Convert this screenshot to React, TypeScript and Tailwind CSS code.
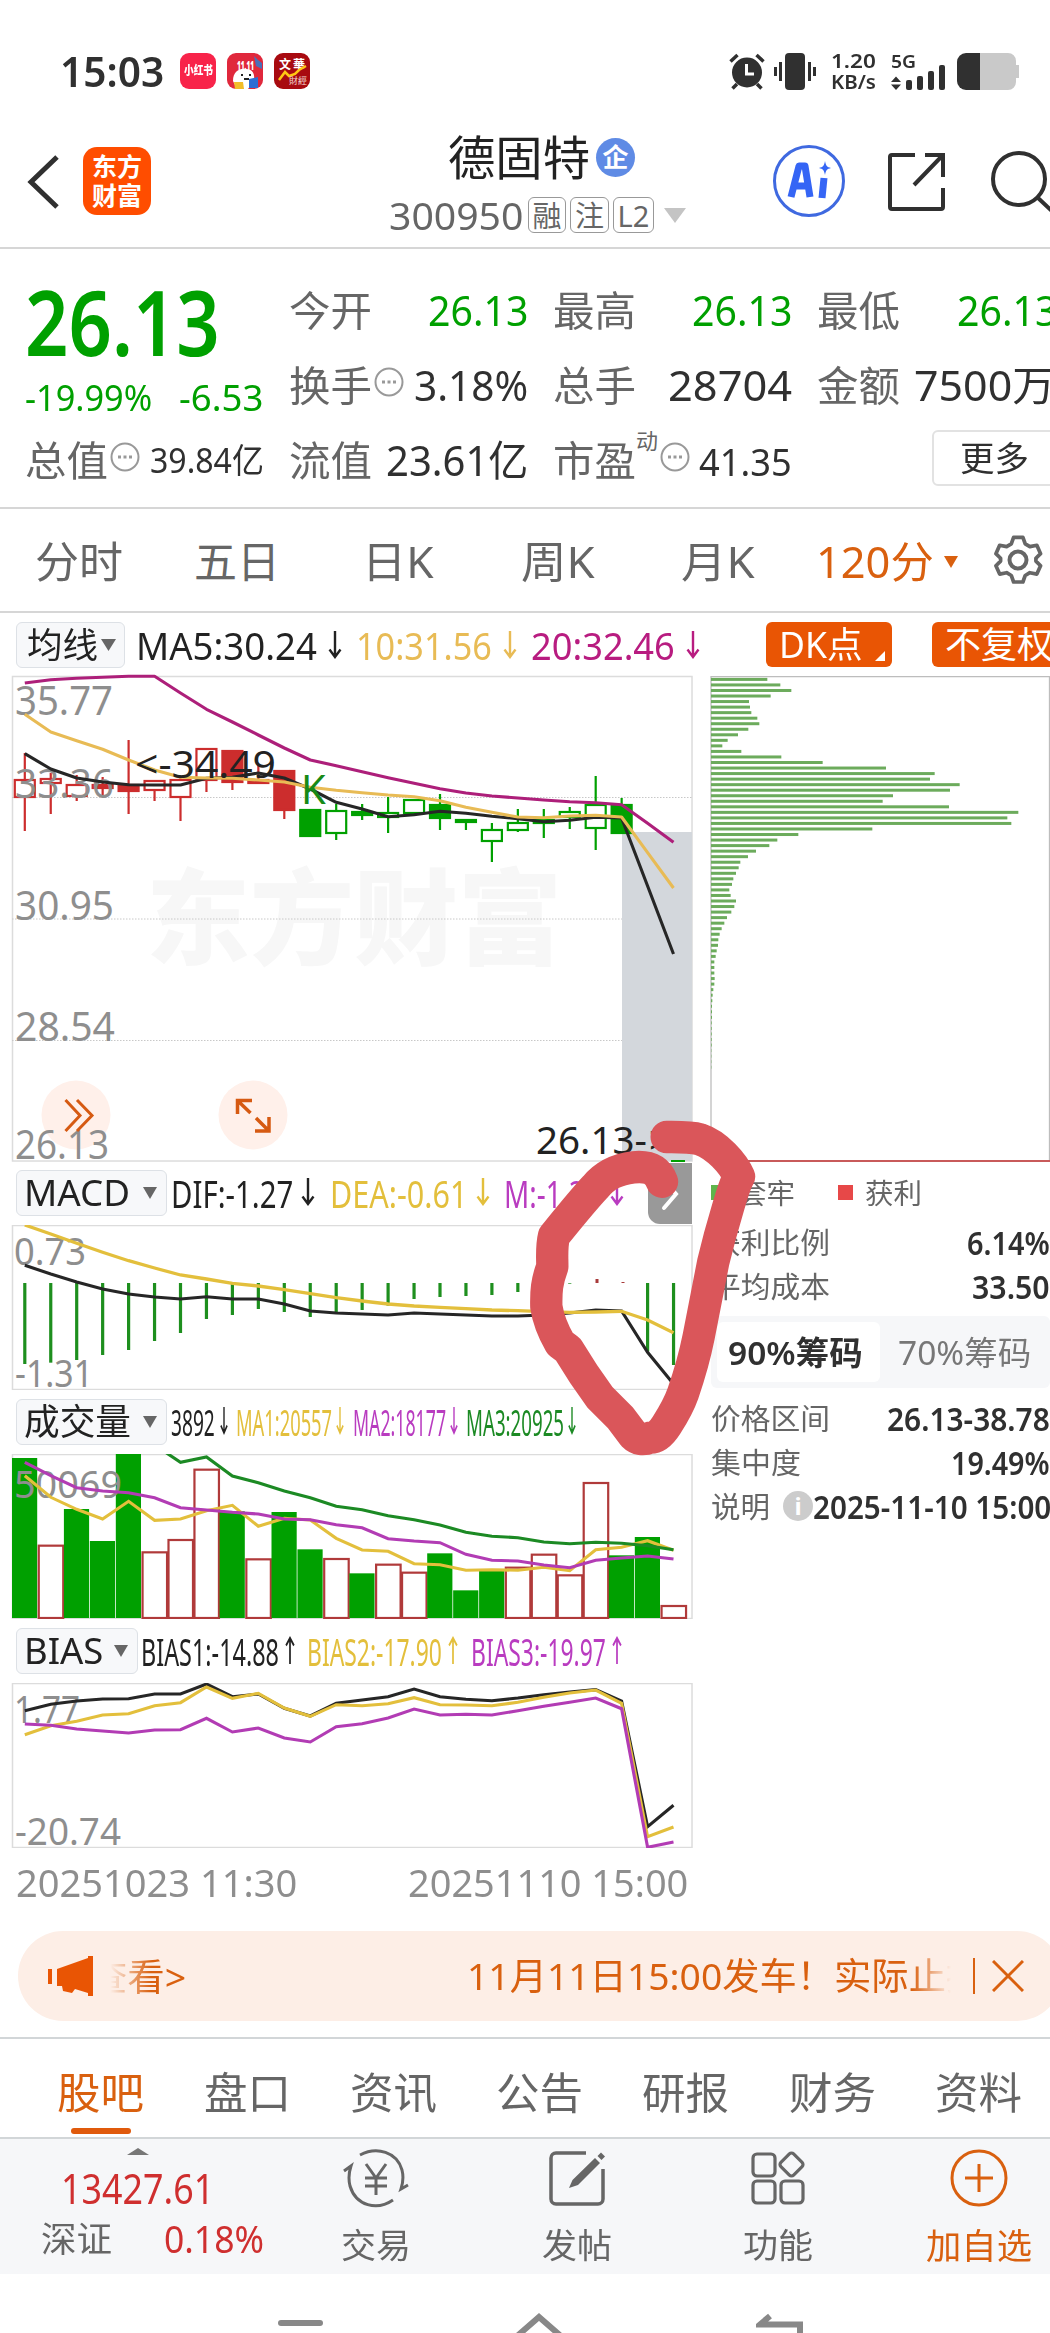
import { useLayoutEffect, useRef, useState } from "react";
import type { ReactNode } from "react";

/* Text condensed or stretched horizontally to the width of its box. */
function Fit({ className, children }: { className: string; children: ReactNode }) {
  const box = useRef<HTMLSpanElement>(null);
  const text = useRef<HTMLSpanElement>(null);
  const [scale, setScale] = useState(1);
  useLayoutEffect(() => {
    if (box.current && text.current && text.current.offsetWidth > 0) {
      setScale(box.current.clientWidth / text.current.offsetWidth);
    }
  }, [children]);
  return (
    <span ref={box} className={`inline-block shrink-0 leading-none ${className}`}>
      <span ref={text} className="inline-block origin-left whitespace-nowrap" style={{ transform: `scaleX(${scale})` }}>
        {children}
      </span>
    </span>
  );
}

function Arrow({ up, className }: { up?: boolean; className: string }) {
  return (
    <svg viewBox="0 0 14 28" preserveAspectRatio="none" className={`h-7 shrink-0 ${className}`} fill="none" stroke="currentColor" strokeWidth="2.4">
      {up ? <path d="M7 28V2M1.5 9.5 7 2l5.500 7.500" /> : <path d="M7 0v26M1.500 18.500 7 26l5.500-7.500" />}
    </svg>
  );
}

function Caret({ className }: { className: string }) {
  return (
    <svg viewBox="0 0 14 12" preserveAspectRatio="none" className={`shrink-0 ${className}`} fill="currentColor">
      <path d="M0 0h14L7 12z" />
    </svg>
  );
}

function Dots() {
  return (
    <svg viewBox="0 0 30 30" className="ml-[2px] size-[30px] shrink-0 -translate-y-[3px]" fill="none" stroke="#999" strokeWidth="2">
      <circle cx="15" cy="15" r="13.500" />
      <path d="M8 15h3M13.500 15h3M19 15h3" strokeWidth="3" />
    </svg>
  );
}

const X0 = 24.8;
const STEP = 25.95;
const line = (values: number[], start = 0) =>
  values.map((v, i) => `${(X0 + (start + i) * STEP).toFixed(1)},${v}`).join(" ");
const thirds = (base: number, values: number[]) => values.map((v) => +(base + v / 3).toFixed(1));

const RED = "#cc2d2d";
const GREEN = "#00a000";

/* colour, kind (h hollow, f filled), body top/bottom, wick top/bottom */
const candles: [string, string, number, number, number, number][] = [
  [RED, "h", 780, 797, 753, 831],
  [RED, "h", 779, 783, 773, 814],
  [RED, "h", 785, 796, 775, 801],
  [RED, "f", 785, 788, 777, 796],
  [RED, "f", 785, 791, 740, 814],
  [RED, "h", 781, 790, 780, 801],
  [RED, "h", 780, 797, 778, 821],
  [RED, "h", 749, 780, 748, 792],
  [RED, "f", 751, 782, 751, 790],
  [RED, "f", 780, 783, 765, 783],
  [RED, "f", 771, 810, 771, 819],
  [GREEN, "f", 810, 836, 809, 837],
  [GREEN, "h", 811, 833, 804, 840],
  [GREEN, "f", 812, 815, 804, 820],
  [GREEN, "h", 813, 817, 797, 833],
  [GREEN, "h", 800, 813, 800, 814],
  [GREEN, "f", 805, 818, 794, 830],
  [GREEN, "f", 820, 822, 820, 830],
  [GREEN, "h", 830, 841, 823, 862],
  [GREEN, "h", 823, 830, 809, 832],
  [GREEN, "f", 820, 823, 809, 838],
  [GREEN, "h", 812, 817, 807, 829],
  [GREEN, "h", 805, 828, 776, 850],
  [GREEN, "f", 805, 833, 798, 833],
];
const ma5 = thirds(660, [281, 327, 354, 366, 374, 375, 375, 355, 352, 339, 354, 387, 427, 447, 470, 464, 454, 460, 469, 476, 485, 481, 472, 474, 678, 882]);
const ma10 = thirds(660, [163, 216, 242, 268, 300, 330, 352, 354, 355, 360, 366, 382, 391, 398, 405, 410, 422, 442, 457, 471, 473, 468, 466, 471, 578, 684]);
const ma20 = thirds(660, [69, 59, 55, 52, 49, 49, 99, 148, 186, 225, 264, 300, 317, 335, 353, 370, 386, 399, 408, 414, 420, 425, 428, 434, 490, 547]);

const SVG_FONT = "[font-family:'Noto_Sans',sans-serif]";

function PriceChart() {
  return (
    <svg viewBox="0 676 700 485" className={`block h-[485px] w-[700px] overflow-visible ${SVG_FONT}`}>
      <rect x="12.500" y="676.500" width="679.500" height="484.500" fill="#fff" stroke="#dcdcdc" strokeWidth="1.500" />
      <text x="146" y="957" fontSize="104" fontWeight="900" fill="#f7f7f7" textLength="416" className="[font-family:'Noto_Sans_CJK_SC',sans-serif]">东方财富</text>
      <g stroke="#c8c8c8" strokeDasharray="1.500 1.500">
        <path d="M12 797.500h680M12 919h680M12 1040.500h680" />
      </g>
      <rect x="622" y="832" width="70" height="329" fill="#d3d7dc" />
      <circle cx="76" cy="1115" r="34.500" fill="#fff0ea" />
      <circle cx="253" cy="1115" r="34.500" fill="#fff0ea" />
      {candles.map(([c, kind, t, b, wt, wb], i) => {
        const x = X0 + i * STEP;
        return (
          <g key={i} stroke={c} strokeWidth="2.200">
            <path d={`M${x} ${wt}V${t}M${x} ${b}V${wb}`} />
            <rect x={x - 10} y={t} width="20" height={b - t} fill={kind === "f" ? c : "#fff"} />
          </g>
        );
      })}
      <g fill="#8e8e8e" fontSize="40">
        <text x="15" y="715" textLength="98" lengthAdjust="spacingAndGlyphs">35.77</text>
        <text x="15" y="798" textLength="99" lengthAdjust="spacingAndGlyphs">33.36</text>
        <text x="15" y="920" textLength="99" lengthAdjust="spacingAndGlyphs">30.95</text>
        <text x="15" y="1041" textLength="100" lengthAdjust="spacingAndGlyphs">28.54</text>
        <text x="15" y="1159" textLength="94" lengthAdjust="spacingAndGlyphs">26.13</text>
      </g>
      <g fill="none" strokeWidth="3.100" strokeLinejoin="round">
        <polyline points={line(ma5)} stroke="#262626" />
        <polyline points={line(ma10)} stroke="#e8bb55" />
        <polyline points={line(ma20)} stroke="#ad1f7a" />
      </g>
      <g fill="#222" fontSize="39">
        <text x="135" y="778" textLength="141" lengthAdjust="spacingAndGlyphs">&lt;-34.49</text>
        <text x="536" y="1154" textLength="111" lengthAdjust="spacingAndGlyphs">26.13-</text>
        <text x="649" y="1154">&gt;</text>
      </g>
      <text x="301" y="804" fontSize="40" fill="#178a17">K</text>
      <g fill="none" stroke="#d65a12" strokeWidth="3">
        <path d="M65.500 1100 80 1115.500 65.500 1131M77 1100l15 15.500L77 1131" />
        <path d="M237.500 1114v-13.500H252M238 1101l12.500 12M269 1117v14h-14M268.500 1130.500 256 1118" strokeWidth="3.500" />
      </g>
      <path d="M671 1161h14" stroke={GREEN} strokeWidth="2" />
    </svg>
  );
}

const macdBars = [612, 608, 600, 585, 570, 543, 519, 477, 465, 447, 456, 471, 459, 450, 437, 417, 411, 408, 405, 396, 385, 371, 0, 0, 574, 615];
const dif = thirds(1160, [316, 342, 366, 387, 402, 411, 417, 410, 417, 417, 432, 453, 459, 462, 465, 459, 462, 465, 468, 468, 465, 459, 450, 453, 577, 672]);
const dea = thirds(1160, [195, 222, 250, 277, 302, 324, 345, 357, 370, 378, 389, 401, 413, 423, 432, 438, 442, 446, 450, 452, 455, 457, 456, 454, 480, 518]);

function MacdChart() {
  return (
    <svg viewBox="0 1225 700 165" className={`block h-[165px] w-[700px] ${SVG_FONT}`}>
      <rect x="12.500" y="1225.500" width="679.500" height="164" fill="#fff" stroke="#dcdcdc" strokeWidth="1.500" />
      <g fill="#8e8e8e" fontSize="38">
        <text x="14" y="1265" textLength="72" lengthAdjust="spacingAndGlyphs">0.73</text>
        <text x="15" y="1387" textLength="78" lengthAdjust="spacingAndGlyphs">-1.31</text>
      </g>
      {macdBars.map((v, i) =>
        v ? <path key={i} d={`M${X0 + i * STEP} 1283V${1160 + v / 3}`} stroke="#1e8f1e" strokeWidth="3.200" /> : null,
      )}
      <path d="M597 1279v4M623 1282v1" stroke="#a83a3a" strokeWidth="3" />
      <polyline points={line(dif)} fill="none" stroke="#262626" strokeWidth="3.100" />
      <polyline points={line(dea)} fill="none" stroke="#e3bf3c" strokeWidth="3.300" />
    </svg>
  );
}

const volumes: [number, 0 | 1][] = [
  [54, 0], [314, 1], [207, 0], [303, 0], [42, 0], [334, 1], [297, 1], [86, 1], [214, 0], [355, 1], [216, 0], [328, 0], [354, 1],
  [400, 0], [371, 1], [395, 1], [340, 0], [451, 0], [388, 0], [380, 1], [341, 1], [403, 1], [126, 1], [346, 0], [291, 0], [495, 1],
];
const vol1 = thirds(1440, [107, 172, 208, 237, 184, 241, 237, 212, 196, 259, 235, 240, 295, 330, 334, 371, 374, 391, 389, 391, 382, 392, 329, 322, 302, 331]);
const vol2 = thirds(1440, [67, 107, 143, 153, 158, 173, 203, 210, 217, 222, 237, 239, 254, 263, 296, 303, 308, 343, 361, 363, 375, 383, 361, 354, 348, 357]);
const vol3 = thirds(1440, [15, 67, 51, 108, 128, 153, 173, 199, 209, 227, 239, 255, 277, 289, 293, 306, 311, 307, 310, 317, 329]);

function VolumeChart() {
  return (
    <svg viewBox="0 1454 700 165" className={`block h-[165px] w-[700px] ${SVG_FONT}`}>
      <rect x="12.500" y="1454.500" width="679.500" height="164" fill="#fff" stroke="#dcdcdc" strokeWidth="1.500" />
      {volumes.map(([v, red], i) => {
        const x = 12 + i * STEP;
        const y = 1440 + v / 3;
        return red ? (
          <rect key={i} x={x + 0.8} y={y + 1} width="24.500" height={1617 - y} fill="#fff" stroke="#b03a3a" strokeWidth="2.200" />
        ) : (
          <rect key={i} x={x} y={y} width="25.200" height={1618 - y} fill={GREEN} />
        );
      })}
      <text x="14" y="1498" fontSize="38" fill="#8e8e8e" textLength="108" lengthAdjust="spacingAndGlyphs">50069</text>
      <g fill="none" strokeWidth="3.100">
        <polyline points={line(vol1)} stroke="#e3bf3c" />
        <polyline points={line(vol2)} stroke="#b23cb4" />
        <polyline points={line(vol3, 5)} stroke="#1c8a24" />
      </g>
    </svg>
  );
}

const bias1 = thirds(1440, [812, 793, 783, 777, 776, 762, 762, 732, 770, 762, 805, 828, 790, 780, 770, 747, 770, 778, 782, 774, 764, 756, 749, 783, 1160, 1096]);
const bias2 = thirds(1440, [884, 857, 844, 825, 821, 797, 788, 741, 775, 760, 804, 829, 794, 797, 791, 773, 794, 795, 797, 787, 772, 759, 750, 790, 1190, 1161]);
const bias3 = thirds(1440, [852, 856, 867, 873, 879, 870, 869, 835, 876, 864, 894, 906, 860, 851, 834, 807, 825, 823, 825, 812, 799, 787, 774, 806, 1222, 1206]);

function BiasChart() {
  return (
    <svg viewBox="0 1683 700 165" className={`block h-[165px] w-[700px] ${SVG_FONT}`}>
      <rect x="12.500" y="1683.500" width="679.500" height="164" fill="#fff" stroke="#dcdcdc" strokeWidth="1.500" />
      <g fill="#8e8e8e" fontSize="38">
        <text x="14" y="1723" textLength="66" lengthAdjust="spacingAndGlyphs">1.77</text>
        <text x="15" y="1845" textLength="106" lengthAdjust="spacingAndGlyphs">-20.74</text>
      </g>
      <g fill="none" strokeWidth="3.100">
        <polyline points={line(bias1)} stroke="#262626" />
        <polyline points={line(bias2)} stroke="#e3bf3c" />
        <polyline points={line(bias3)} stroke="#b23cb4" />
      </g>
    </svg>
  );
}

const chips = [
  231, 270, 303, 241, 176, 179, 183, 201, 207, 174, 143, 112, 96, 153, 273, 397, 587, 733, 719, 808, 779, 608, 577, 776, 984, 951,
  963, 546, 324, 261, 237, 197, 173, 150, 145, 137, 129, 125, 117, 121, 137, 132, 123, 110, 102, 94, 88, 84, 83, 79, 76, 72, 72,
  72, 73, 72, 69, 67, 66, 65, 65, 65, 64, 64, 64, 64, 64, 63, 63, 63, 63,
];

function ChipChart() {
  return (
    <svg viewBox="700 676 350 486" className="block h-[486px] w-[350px]">
      <path d="M711 1161V676.500h338.500V1161" fill="none" stroke="#bdbdbd" strokeWidth="1.300" />
      <path d="M711 1161h339" stroke="#c85a5a" strokeWidth="2" />
      {chips.map((v, i) => (
        <rect key={i} x="711" y={677.9 + i * 5.54} width={(v - 62) / 3} height="3" fill="#6cab5c" />
      ))}
    </svg>
  );
}

function Indicator({ name, box, text, children }: { name: string; box: string; text: string; children: ReactNode }) {
  return (
    <div className="flex h-16 items-center pl-4">
      <div className={`flex h-[46px] shrink-0 items-center justify-between rounded-md border border-[#dde1e6] bg-[#f7f8fa] pr-[9px] pl-[7px] text-[#222] ${box}`}>
        <Fit className={`text-[36px] ${text}`}>{name}</Fit>
        <Caret className="h-3 w-3.5 text-[#666]" />
      </div>
      <div className="flex items-center pb-[2px]">{children}</div>
    </div>
  );
}

function Row({ label, labelW, value, valueW, info }: { label: string; labelW: string; value: string; valueW: string; info?: boolean }) {
  return (
    <div className="flex h-11 items-center justify-between">
      <div className="flex items-center">
        <Fit className={`text-[29px] text-[#666] ${labelW}`}>{label}</Fit>
        {info && <span className="ml-[13px] flex size-[30px] items-center justify-center rounded-full bg-[#ccc] text-[24px] leading-none font-bold text-white">i</span>}
      </div>
      <Fit className={`text-[33px] font-semibold text-[#303030] ${valueW}`}>{value}</Fit>
    </div>
  );
}

const tag = "flex h-9 items-center justify-center rounded-md border border-[#999] text-[29px] leading-none text-[#666]";
const label = "text-[41px] text-[#666] w-[83px]";

export default function App() {
  return (
    <div className="relative h-[2333px] w-[1050px] overflow-hidden bg-white [font-family:'Noto_Sans','Noto_Sans_CJK_SC',sans-serif]">
      {/* status bar */}
      <div className="flex h-[142px] items-center pl-[60px] text-[#303030]">
        <Fit className="w-[104px] text-[41px] font-semibold">15:03</Fit>
        <span className="ml-[16px] flex size-9 items-center justify-center rounded-[9px] bg-[#f8244a] text-white"><Fit className="w-[29px] text-[12px] font-black">小红书</Fit></span>
        <svg viewBox="0 0 36 36" className="ml-[11px] size-9">
          <rect width="36" height="36" rx="9" fill="#e0283c" />
          <path d="M27 3l4 4 4 3v6l-6-3z" fill="#4a6fb8" />
          <path d="M6 28c0-9 6-13 13-12 7 0 9 5 8 12l-6 8H10z" fill="#fff" />
          <path d="M14 22h2m6 0h2M17 26h5" stroke="#222" strokeWidth="2" />
          <path d="M7 29h9l1 7H8z" fill="#f2bd28" />
          <path d="M22 26l9-2v11h-9z" fill="#2e6ed4" />
          <text x="10" y="17" fontSize="12" fontWeight="900" fill="#fff" textLength="17" lengthAdjust="spacingAndGlyphs">11.11</text>
        </svg>
        <svg viewBox="0 0 36 36" className="ml-[11px] size-9">
          <rect width="36" height="36" rx="9" fill="#a80a10" />
          <text x="5" y="16" fontSize="12" fontWeight="700" fill="#fff" textLength="26" className="[font-family:'Noto_Sans_CJK_SC',sans-serif]">文華</text>
          <path d="M5 27l6-8 4 4 6-2 4-4 7-4" fill="none" stroke="#ffc814" strokeWidth="2.500" />
          <text x="15" y="31" fontSize="9" fill="#f3d9d0" textLength="18" className="[font-family:'Noto_Sans_CJK_SC',sans-serif]">財經</text>
        </svg>
        <svg viewBox="0 0 36 37" className="ml-[419px] h-[37px] w-9" fill="none" stroke="#303030" strokeWidth="3.500">
          <circle cx="18" cy="19.500" r="15" fill="#303030" stroke="none" />
          <path d="M1.500 8.500 8.500 2M34.500 8.500 27.500 2M8 31l-4.500 4.500M28 31l4.500 4.500" />
          <path d="M17.500 11v10h7.500" stroke="#fff" strokeWidth="3" />
        </svg>
        <svg viewBox="0 0 42 37" className="ml-[9px] h-[37px] w-[42px]" stroke="#303030" strokeWidth="3">
          <rect x="11" y="0" width="20" height="37" rx="4" fill="#303030" stroke="none" />
          <path d="M1.500 14v9M6.500 9v19M40.500 14v9M35.500 9v19" />
        </svg>
        <div className="ml-[15px] flex w-[45px] flex-col gap-px font-semibold">
          <Fit className="w-[45px] text-[20px]">1.20</Fit>
          <Fit className="w-[45px] text-[20px]">KB/s</Fit>
        </div>
        <div className="ml-[15px] flex h-[37px] w-[57px] flex-col justify-between">
          <Fit className="w-[25px] text-[17px] font-semibold">5G</Fit>
          <svg viewBox="0 0 57 24" className="-mt-4 h-6 w-[57px] overflow-visible" fill="#303030">
            <path d="M0 16l5-5.500 5 5.500zM0 18.500l5 5.500 5-5.500z" />
            <rect x="15" y="14" width="6" height="10" rx="2" />
            <rect x="26" y="10" width="6" height="14" rx="2" />
            <rect x="37" y="5" width="6" height="19" rx="2" />
            <rect x="48" y="-1" width="6" height="25" rx="2" />
          </svg>
        </div>
        <svg viewBox="0 0 62 37" className="ml-[9px] h-[37px] w-[62px]">
          <path d="M23 0h28a8 8 0 0 1 8 8v4h3v13h-3v4a8 8 0 0 1-8 8H23z" fill="#c9c9c9" />
          <path d="M23 0H9a9 9 0 0 0-9 9v19a9 9 0 0 0 9 9h14z" fill="#303030" />
        </svg>
      </div>

      {/* title bar */}
      <header className="-mt-[10px] flex h-[117px] border-b-2 border-[#d6d6d6]">
        <svg viewBox="0 0 32 54" className="mt-[23px] ml-[27px] h-[54px] w-8 shrink-0" fill="none" stroke="#303030" strokeWidth="5"><path d="M30 2 4 27l26 25" /></svg>
        <div className="mt-[15px] ml-6 flex size-[68px] shrink-0 flex-col items-center justify-center rounded-[14px] bg-[#ff4d00] text-[25px] leading-[29px] font-bold text-white">
          <span>东方</span><span>财富</span>
        </div>
        <div className="ml-[238px] flex w-[300px] shrink-0 flex-col">
          <div className="flex h-[50px] items-center pl-[59px]">
            <Fit className="w-[142px] text-[47px] text-[#222]">德固特</Fit>
            <span className="ml-[6px] flex size-[39px] items-center justify-center rounded-full bg-[#5f8be5] text-[26px] leading-none font-bold text-white">企</span>
          </div>
          <div className="mt-[14px] flex h-[38px] items-center">
            <Fit className="w-[134px] text-[38px] text-[#666]">300950</Fit>
            <span className={`${tag} ml-[5px] w-[38px]`}>融</span>
            <span className={`${tag} ml-1 w-[39px]`}>注</span>
            <span className={`${tag} ml-1 w-[41px]`}>L2</span>
            <Caret className="ml-[10px] h-[15px] w-[22px] text-[#c4c4c4]" />
          </div>
        </div>
        <div className="mt-[13px] ml-[84px] flex size-[72px] shrink-0 items-center justify-center rounded-full border-[3.500px] border-[#3f69e0]">
          <svg viewBox="0 0 44 40" className="h-10 w-11" fill="none" stroke="#3565f5" strokeWidth="7" strokeLinejoin="round">
            <path d="M4 36 12 5h6l5 31M8 25h14" />
            <path d="M37 17l-2 20" />
            <path d="M38 0c1 5 2 6 6 7-4 1-5 2-6 7-1-5-2-6-6-7 4-1 5-2 6-7z" fill="#3565f5" stroke="none" />
          </svg>
        </div>
        <svg viewBox="0 0 60 60" className="mt-5 ml-[42px] size-[60px] shrink-0" fill="none" stroke="#303030" strokeWidth="4">
          <path d="M28 3H5a2 2 0 0 0-2 2v50a2 2 0 0 0 2 2h49a2 2 0 0 0 2-2V36M38 3h18v22M55 4 27 33" />
        </svg>
        <svg viewBox="0 0 64 64" className="mt-[19px] ml-[42px] size-16 shrink-0" fill="none" stroke="#303030" strokeWidth="4">
          <circle cx="30" cy="28" r="26" /><path d="m48 46 16 15" />
        </svg>
      </header>

      {/* quote summary */}
      <section className="grid h-[260px] grid-cols-[264px_264px_264px_300px] border-b-2 border-[#d6d6d6] pl-[25px] text-[#303030]">
        <div className="flex flex-col items-start text-[#00a000]">
          <Fit className="mt-[27px] w-[195px] text-[90px] font-semibold">26.13</Fit>
          <div className="mt-[12px] flex items-center gap-[27px]">
            <Fit className="w-[127px] text-[37px]">-19.99%</Fit>
            <Fit className="w-[84px] text-[37px]">-6.53</Fit>
          </div>
          <div className="mt-[25px] flex h-10 items-center text-[#303030]">
            <Fit className={label}>总值</Fit><Dots />
            <Fit className="ml-[10px] w-[114px] text-[34px]">39.84亿</Fit>
          </div>
        </div>
        <div className="flex flex-col gap-[35px] pt-[41px]">
          <div className="flex h-10 items-center justify-between pr-[25px]"><Fit className={label}>今开</Fit><Fit className="w-[100px] text-[42px] text-[#00a000]">26.13</Fit></div>
          <div className="flex h-10 items-center pr-[25px]"><Fit className={label}>换手</Fit><Dots /><Fit className="ml-[10px] w-[114px] text-[42px]">3.18%</Fit></div>
          <div className="flex h-10 items-center justify-between pr-[25px]"><Fit className={label}>流值</Fit><Fit className="w-[142px] text-[42px]">23.61亿</Fit></div>
        </div>
        <div className="flex flex-col gap-[35px] pt-[41px]">
          <div className="flex h-10 items-center justify-between pr-[25px]"><Fit className={label}>最高</Fit><Fit className="w-[100px] text-[42px] text-[#00a000]">26.13</Fit></div>
          <div className="flex h-10 items-center justify-between pr-[25px]"><Fit className={label}>总手</Fit><Fit className="w-[124px] text-[42px]">28704</Fit></div>
          <div className="flex h-10 items-center"><Fit className={label}>市盈</Fit><span className="-mt-10 text-[22px] leading-none text-[#666]">动</span><Dots /><Fit className="ml-[9px] w-[93px] text-[39px]">41.35</Fit></div>
        </div>
        <div className="flex flex-col gap-[35px] pt-[41px]">
          <div className="flex h-10 items-center"><Fit className={label}>最低</Fit><Fit className="ml-[57px] w-[100px] text-[42px] text-[#00a000]">26.13</Fit></div>
          <div className="flex h-10 items-center"><Fit className={label}>金额</Fit><Fit className="ml-[14px] w-[141px] text-[42px]">7500万</Fit></div>
          <div className="-mt-[10px] ml-[115px] flex h-14 w-36 shrink-0 items-center rounded-md border-2 border-[#e2e2e2] pl-[26px]"><Fit className="w-[69px] text-[34px]">更多</Fit></div>
        </div>
      </section>

      {/* period tabs */}
      <nav className="flex h-[104px] items-center border-b-2 border-[#d6d6d6] pt-[3px] pl-[35px] text-[43px] text-[#666]">
        <Fit className="w-[88px]">分时</Fit>
        <Fit className="ml-[71px] w-[86px]">五日</Fit>
        <Fit className="ml-[82px] w-[72px]">日K</Fit>
        <Fit className="ml-[87px] w-[74px]">周K</Fit>
        <Fit className="ml-[86px] w-[74px]">月K</Fit>
        <Fit className="ml-[61px] w-[118px] text-[#d9600f]">120分</Fit>
        <Caret className="ml-[10px] h-3 w-3.5 text-[#d9600f]" />
        <svg viewBox="0 0 50 52" className="ml-[35px] h-[52px] w-[50px] shrink-0 -translate-y-[2px]" fill="none" stroke="#666" strokeWidth="4" strokeLinejoin="round">
          <path d="M20 2h10l2.500 7 5 3 7.500-1.500 4 9-5 5v3l5 5-4 9-7.500-1.500-5 3L30 50H20l-2.500-7-5-3L5 41.500l-4-9 5-5v-3l-5-5 4-9L12.500 12l5-3z" transform="translate(2 1.500) scale(.93)" />
          <circle cx="25" cy="26" r="8.500" />
        </svg>
      </nav>

      {/* moving averages */}
      <div className="flex h-[63px] items-center pl-4">
        <div className="flex h-[46px] w-[109px] shrink-0 items-center rounded-md border border-[#dde1e6] bg-[#f7f8fa] pl-[10px] text-[#222]">
          <Fit className="w-[71px] text-[35px]">均线</Fit>
          <Caret className="ml-[3px] h-3 w-[15px] text-[#666]" />
        </div>
        <Fit className="ml-[11px] w-[181px] text-[38px] text-[#222]">MA5:30.24</Fit>
        <Arrow className="ml-[11px] w-3.5 text-[#222]" />
        <Fit className="ml-[14px] w-[136px] text-[38px] text-[#e8bb55]">10:31.56</Fit>
        <Arrow className="ml-[11px] w-3.5 text-[#e8bb55]" />
        <Fit className="ml-[14px] w-[144px] text-[38px] text-[#b81c80]">20:32.46</Fit>
        <Arrow className="ml-[11px] w-3.5 text-[#b81c80]" />
        <div className="ml-[66px] flex h-[45px] w-[126px] shrink-0 items-center rounded-md bg-[#e95504] pl-[13px] text-white">
          <Fit className="w-[84px] text-[36px]">DK点</Fit>
          <svg viewBox="0 0 10 10" className="mt-[23px] ml-[12px] size-[10px]" fill="#fff"><path d="M10 0v10H0z" /></svg>
        </div>
        <div className="ml-10 flex h-[45px] w-[130px] shrink-0 items-center rounded-md bg-[#e95504] pl-[13px] text-white">
          <Fit className="w-[108px] text-[36px]">不复权</Fit>
        </div>
      </div>

      <main className="flex h-[1255px]">
        <div className="w-[700px] shrink-0">
          <PriceChart />
          <div className="relative">
            <Indicator name="MACD" box="w-[151px]" text="w-[106px]">
              <Fit className="ml-[4px] w-[122px] text-[39px] text-[#222]">DIF:-1.27</Fit>
              <Arrow className="ml-[8px] w-3.5 text-[#222]" />
              <Fit className="ml-[15px] w-[137px] text-[39px] text-[#e3bf3c]">DEA:-0.61</Fit>
              <Arrow className="ml-[9px] w-3.5 text-[#e3bf3c]" />
              <Fit className="ml-[14px] w-[97px] text-[39px] text-[#b93cc0]">M:-1.31</Fit>
              <Arrow className="ml-[9px] w-3.5 text-[#b93cc0]" />
            </Indicator>
            <div className="absolute top-[2px] right-2 flex h-[61px] w-11 items-center justify-center rounded-bl-xl bg-[#999]">
              <svg viewBox="0 0 18 34" className="h-[34px] w-[18px]" fill="none" stroke="#fff" strokeWidth="4" strokeLinecap="round"><path d="m3 3 12 14L3 31" /></svg>
            </div>
          </div>
          <MacdChart />
          <Indicator name="成交量" box="w-[151px]" text="w-[107px]">
            <Fit className="ml-[4px] w-[44px] text-[37px] text-[#222]">3892</Fit>
            <Arrow className="ml-[5px] w-2 text-[#222]" />
            <Fit className="ml-[8px] w-[96px] text-[37px] text-[#e3bf3c]">MA1:20557</Fit>
            <Arrow className="ml-[4px] w-2 text-[#e3bf3c]" />
            <Fit className="ml-[9px] w-[93px] text-[37px] text-[#b93cc0]">MA2:18177</Fit>
            <Arrow className="ml-[4px] w-2 text-[#b93cc0]" />
            <Fit className="ml-[8px] w-[98px] text-[37px] text-[#1c8a24]">MA3:20925</Fit>
            <Arrow className="ml-[4px] w-2 text-[#1c8a24]" />
          </Indicator>
          <VolumeChart />
          <Indicator name="BIAS" box="w-[122px]" text="w-[79px]">
            <Fit className="ml-[3px] w-[138px] text-[39px] text-[#222]">BIAS1:-14.88</Fit>
            <Arrow up className="ml-[6px] w-2.5 text-[#222]" />
            <Fit className="ml-[12px] w-[135px] text-[39px] text-[#e3bf3c]">BIAS2:-17.90</Fit>
            <Arrow up className="ml-[6px] w-2.5 text-[#e3bf3c]" />
            <Fit className="ml-[13px] w-[135px] text-[39px] text-[#b93cc0]">BIAS3:-19.97</Fit>
            <Arrow up className="ml-[6px] w-2.5 text-[#b93cc0]" />
          </Indicator>
          <BiasChart />
          <div className="flex h-[66px] items-center justify-between pr-[12px] pl-[16px] text-[39px] text-[#8e8e8e]">
            <Fit className="w-[281px]">20251023 11:30</Fit>
            <Fit className="w-[280px]">20251110 15:00</Fit>
          </div>
        </div>

        <aside className="w-[350px]">
          <ChipChart />
          <div className="pl-[11px]">
            <div className="flex h-[58px] items-center pt-[3px] text-[28px] leading-none text-[#666]">
              <span className="size-[15px] bg-[#5fb44b]" />
              <Fit className="ml-[12px] w-[57px]">套牢</Fit>
              <span className="ml-[43px] size-[15px] bg-[#e74848]" />
              <Fit className="ml-[12px] w-[57px]">获利</Fit>
            </div>
            <Row label="获利比例" labelW="w-[119px]" value="6.14%" valueW="w-[83px]" />
            <Row label="平均成本" labelW="w-[119px]" value="33.50" valueW="w-[78px]" />
            <div className="mt-[8px] mb-[8px] flex h-[72px] items-center rounded-md bg-[#f6f7f9] pl-[6px]">
              <div className="flex h-[60px] w-[163px] items-center rounded-md bg-white pl-[11px] text-[#303030]"><Fit className="w-[135px] text-[33px] font-semibold">90%筹码</Fit></div>
              <Fit className="ml-[18px] w-[133px] text-[33px] text-[#777]">70%筹码</Fit>
            </div>
            <Row label="价格区间" labelW="w-[119px]" value="26.13-38.78" valueW="w-[163px]" />
            <Row label="集中度" labelW="w-[90px]" value="19.49%" valueW="w-[99px]" />
            <Row label="说明" labelW="w-[59px]" value="2025-11-10 15:00" valueW="w-[238px]" info />
          </div>
        </aside>
      </main>

      {/* announcement */}
      <div className="ml-[18px] flex h-[90px] w-[1044px] items-center rounded-[45px] bg-[#fdeee6] text-[#d9600f]">
        <svg viewBox="0 0 46 40" className="ml-[30px] h-10 w-[46px] shrink-0" fill="#e95504">
          <path d="M0 13h4v15H0zM9 13 40 2V0h5v40h-5v-3l-13-4-3 4-9-2-1-5H9z" />
        </svg>
        <div className="ml-[14px] flex shrink-0 items-center text-[37px] [mask-image:linear-gradient(to_right,transparent_3%,black_55%)]">
          <Fit className="w-[78px] overflow-hidden"><span className="-ml-[18px]">查看&gt;</span></Fit>
        </div>
        <div className="ml-[281px] w-[494px] shrink-0 overflow-hidden py-1 [mask-image:linear-gradient(to_right,black_90%,transparent_98%)]">
          <Fit className="w-[516px] text-[37px]">11月11日15:00发车！实际止损</Fit>
        </div>
        <span className="ml-[12px] h-9 w-[1.500px] shrink-0 bg-[#d9600f]" />
        <svg viewBox="0 0 32 32" className="ml-[17px] size-8 shrink-0" fill="none" stroke="currentColor" strokeWidth="3"><path d="m1 1 30 30M31 1 1 31" /></svg>
      </div>

      {/* content tabs */}
      <nav className="mt-4 flex h-[102px] items-start border-y-2 border-[#d2d6d8] pt-[22px] pl-[57px] text-[43px] text-[#666]">
        <div className="relative w-[146.500px] shrink-0 text-[#d9600f]">
          <Fit className="w-[87px]">股吧</Fit>
          <span className="absolute -bottom-[8px] left-[14px] h-[6px] w-[60px] rounded-full bg-[#e05a0c]" />
        </div>
        {["盘口", "资讯", "公告", "研报", "财务", "资料"].map((t) => (
          <div key={t} className="w-[146.300px] shrink-0"><Fit className="w-[87px]">{t}</Fit></div>
        ))}
      </nav>

      {/* action bar */}
      <footer className="flex h-[135px] bg-[#f6f7f9] text-[#666]">
        <div className="flex w-[275px] shrink-0 flex-col items-center pt-[9px] text-[#cf2f2f]">
          <svg viewBox="0 0 22 7" className="h-[7px] w-[22px]" fill="#777"><path d="M11 0l11 7H0z" /></svg>
          <Fit className="mt-[13px] w-[153px] text-[41px]">13427.61</Fit>
          <div className="mt-[10px] ml-[30px] flex w-[223px] items-center justify-between">
            <Fit className="w-[71px] text-[35px] text-[#666]">深证</Fit>
            <Fit className="w-[100px] text-[38px]">0.18%</Fit>
          </div>
        </div>
        <div className="flex w-[201px] shrink-0 flex-col items-center pt-[9px]">
          <svg viewBox="0 0 66 60" className="h-[60px] w-[66px]" fill="none" stroke="#666" strokeWidth="3">
            <path d="M17 7C34-2 54 4 59 22c2 8 1 13-1 19l7-4M50 52C34 63 13 58 7 38c-2-8-1-14 1-20l-7 5" />
            <path d="m23 16 10 14 10-14M33 30v17M22 30h22M22 38h22" />
          </svg>
          <Fit className="mt-[20px] w-[70px] text-[34px]">交易</Fit>
        </div>
        <div className="flex w-[201px] shrink-0 flex-col items-center pt-[10px]">
          <svg viewBox="0 0 58 58" className="h-[58px] w-[58px]" fill="none" stroke="#666" strokeWidth="3.500">
            <path d="M38 4H8a5 5 0 0 0-5 5v41a5 5 0 0 0 5 5h42a5 5 0 0 0 5-5V20" />
            <path d="M21 39l3.500-8L47 9l5 5-22 22zM49.500 7l3.500-3.500 4 4-3.500 3.500z" fill="#666" stroke="none" />
          </svg>
          <Fit className="mt-[21px] w-[70px] text-[34px]">发帖</Fit>
        </div>
        <div className="flex w-[201px] shrink-0 flex-col items-center pt-[10px]">
          <svg viewBox="0 0 56 58" className="h-[58px] w-14" fill="none" stroke="#666" strokeWidth="3.200">
            <rect x="3" y="5" width="22" height="22" rx="4" /><rect x="3" y="32" width="22" height="22" rx="4" /><rect x="31" y="32" width="22" height="22" rx="4" />
            <rect x="32.500" y="6.500" width="18" height="18" rx="3" transform="rotate(45 41.500 15.500)" />
          </svg>
          <Fit className="mt-[21px] w-[70px] text-[34px]">功能</Fit>
        </div>
        <div className="flex w-[201px] shrink-0 flex-col items-center pt-[9px] text-[#d9600f]">
          <svg viewBox="0 0 60 60" className="size-[60px]" fill="none" stroke="currentColor" strokeWidth="3"><circle cx="30" cy="30" r="27" /><path d="M30 16v28M16 30h28" /></svg>
          <Fit className="mt-[20px] w-[106px] text-[35px]">加自选</Fit>
        </div>
      </footer>

      {/* system navigation */}
      <div className="flex items-start pt-[38px] pl-[278px]">
        <span className="mt-[8px] h-[6px] w-[45px] rounded-sm bg-[#888]" />
        <svg viewBox="0 0 70 24" className="ml-[181px] h-6 w-[70px]" fill="none" stroke="#888" strokeWidth="6"><path d="M4 32 35 5l31 27" /></svg>
        <svg viewBox="0 0 50 24" className="ml-[182px] h-6 w-[50px]" fill="none" stroke="#888" strokeWidth="6"><path d="M14 4 4 12.500h40V30" /></svg>
      </div>

      {/* hand-drawn marker loop */}
      <svg viewBox="0 0 840 1050" className="pointer-events-none absolute top-[1110px] left-[500px] h-[350px] w-[280px]" fill="none" stroke="#da565a" strokeWidth="97" strokeLinecap="round" strokeLinejoin="round">
        <path d="M486 215C470 175 440 168 400 172C350 178 315 195 285 232C245 275 205 325 162 378C154 410 157 440 157 470C140 515 138 545 139 590C145 630 160 665 180 700L204 718C235 770 265 815 300 862L360 922L400 975Q420 995 450 983Q475 985 500 945Q535 890 549 850Q580 760 596 680L640 455Q658 380 682 300Q705 220 717 200C700 160 650 105 600 88C570 80 540 81 500 81" />
      </svg>
    </div>
  );
}
